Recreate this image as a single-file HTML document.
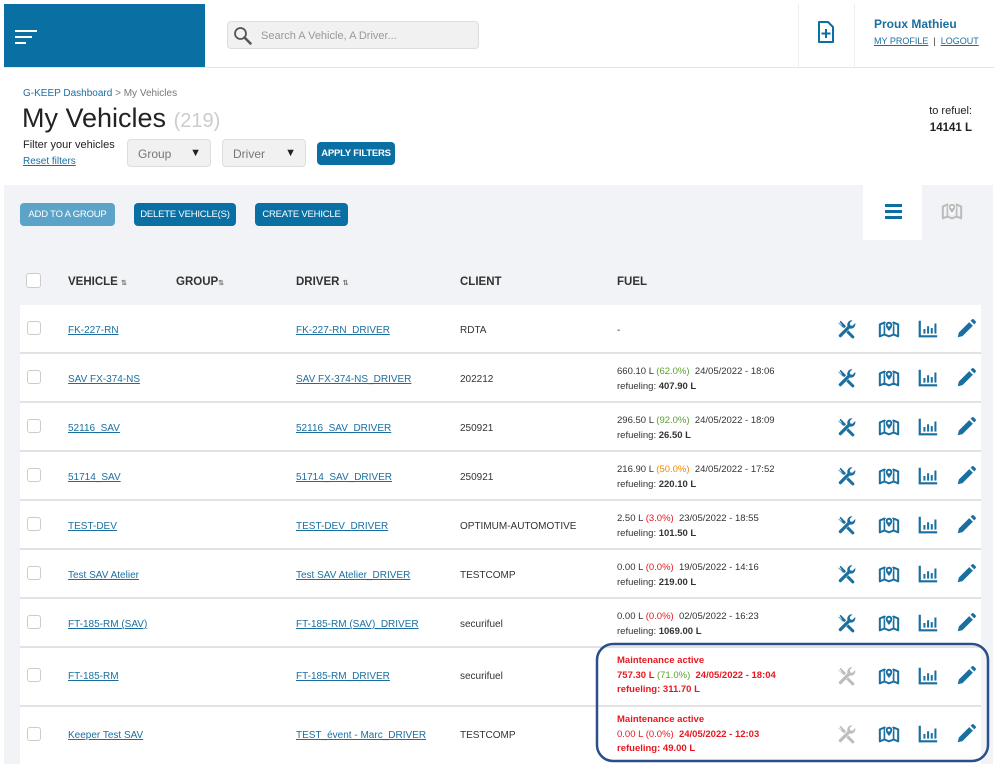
<!DOCTYPE html>
<html><head><meta charset="utf-8"><style>
*{margin:0;padding:0;box-sizing:border-box}
body{width:998px;height:764px;overflow:hidden;background:#fff;font-family:"Liberation Sans",sans-serif;color:#333;position:relative}
.a{position:absolute}
.lnk{color:#1a6fa0;text-decoration:underline;font-size:10px}
.btn{position:absolute;background:#0a6fa3;color:#fff;font-size:9.5px;border-radius:4px;text-align:center;line-height:24px;letter-spacing:-0.2px}
.row{position:absolute;left:20px;width:961px;background:#fff;border-bottom:2px solid #e2e2e4}
.cb{position:absolute;left:7px;width:14px;height:14px;border:1px solid #ccc;border-radius:3px;background:#fff}
.t{position:absolute;font-size:10px;white-space:nowrap}
.f{position:absolute;left:597px;font-size:9.5px;line-height:14.5px;white-space:nowrap}
.f b{font-weight:bold}
.hd{position:absolute;top:276px;font-size:11.5px;font-weight:bold;color:#333}
.red{color:#e8171f}.grn{color:#5aa02c}.org{color:#f08c00}
</style></head><body>
<svg width="0" height="0" style="position:absolute">
<defs>
<symbol id="tool" viewBox="0 0 24 24"><path d="M3 5l2-2 6 6-2 2z M4 4l-1.5 1.5 6 6" fill="currentColor"/><path d="M13.5 13.5l6 6a1.6 1.6 0 0 1-2.3 2.3l-6-6z" fill="currentColor"/><path d="M21 5.5l-3 3-2.5-.5-.5-2.5 3-3a5 5 0 0 0-5.5 6.5L3 18.5a2 2 0 0 0 2.5 2.5L15 11.5a5 5 0 0 0 6-6z" fill="currentColor"/></symbol>
<symbol id="map" viewBox="0 0 24 24"><path d="M2 7l5-2 5 2 5-2 5 2v13l-5-2-5 2-5-2-5 2z" fill="none" stroke="currentColor" stroke-width="2.2" stroke-linejoin="round"/><path d="M7 5v13M17 5v13" stroke="currentColor" stroke-width="1.8"/><path d="M12 15c-3-3.5-4.2-5.2-4.2-7.2a4.2 4.2 0 0 1 8.4 0c0 2-1.2 3.7-4.2 7.2z" fill="currentColor" stroke="#fff" stroke-width="1"/><circle cx="12" cy="7.8" r="1.5" fill="#fff"/></symbol>
<symbol id="chart" viewBox="0 0 24 24"><path d="M3 3v17h19" fill="none" stroke="currentColor" stroke-width="2.4"/><rect x="7" y="12" width="2.2" height="5" fill="currentColor"/><rect x="11" y="9" width="2.2" height="8" fill="currentColor"/><rect x="15" y="11" width="2.2" height="6" fill="currentColor"/><rect x="19" y="6" width="2.2" height="11" fill="currentColor"/></symbol>
<symbol id="pen" viewBox="0 0 24 24"><path d="M3 21l1.2-5.2L15.5 4.5l4 4L8.2 19.8z" fill="currentColor"/><path d="M17 3l1.5-1.5a1.5 1.5 0 0 1 2 0l2 2a1.5 1.5 0 0 1 0 2L21 7z" fill="currentColor"/></symbol>
</defs></svg>

<div class="a" style="left:4px;top:4px;width:201px;height:63px;background:#0a6fa3"></div>
<div class="a" style="left:15px;top:30px;width:22px;height:2px;background:#fff"></div>
<div class="a" style="left:15px;top:36px;width:17px;height:2px;background:#fff"></div>
<div class="a" style="left:15px;top:42px;width:11px;height:2px;background:#fff"></div>
<div class="a" style="left:227px;top:21px;width:252px;height:28px;background:#f1f1f1;border:1px solid #ddd;border-radius:4px"></div>
<svg class="a" style="left:233px;top:26px" width="20" height="20" viewBox="0 0 20 20"><circle cx="7.5" cy="7.5" r="5.5" fill="none" stroke="#555" stroke-width="1.8"/><path d="M11.5 11.5l6 6" stroke="#555" stroke-width="2.6" stroke-linecap="round"/></svg>
<div class="a" style="left:261px;top:30px;font-size:11px;color:#999">Search A Vehicle, A Driver...</div>
<div class="a" style="left:4px;top:67px;width:990px;height:1px;background:#e5e5e5"></div>
<div class="a" style="left:798px;top:4px;width:1px;height:63px;background:#eee"></div>
<div class="a" style="left:854px;top:4px;width:1px;height:63px;background:#eee"></div>
<svg class="a" style="left:817px;top:20px" width="18" height="24" viewBox="0 0 18 24"><path d="M2 2h9l5 5v15H2z" fill="none" stroke="#0a6fa3" stroke-width="2" stroke-linejoin="round"/><path d="M9 9v9M4.5 13.5h9" stroke="#0a6fa3" stroke-width="2"/></svg>
<div class="a" style="left:874px;top:17px;font-size:12px;font-weight:bold;color:#1a6fa0">Proux Mathieu</div>
<div class="a" style="left:874px;top:36px;font-size:9px;color:#1a6fa0"><u>MY PROFILE</u> &nbsp;<span style="color:#333">|</span>&nbsp; <u>LOGOUT</u></div>

<div class="a" style="left:23px;top:88px;font-size:10px;color:#1a6fa0">G-KEEP Dashboard <span style="color:#777">&gt; My Vehicles</span></div>
<div class="a" style="left:22px;top:103px;font-size:27px;color:#222">My Vehicles <span style="font-size:20px;color:#ccc">(219)</span></div>
<div class="a" style="left:23px;top:139px;font-size:11px;color:#222">Filter your vehicles</div>
<div class="a lnk" style="left:23px;top:156px;font-size:10px">Reset filters</div>
<div class="a" style="left:127px;top:139px;width:84px;height:28px;background:#f1f1f1;border:1px solid #ddd;border-radius:4px;font-size:12px;color:#777;padding:7px 0 0 10px">Group<span style="position:absolute;right:9px;top:7px;color:#222;font-size:11px">▼</span></div>
<div class="a" style="left:222px;top:139px;width:84px;height:28px;background:#f1f1f1;border:1px solid #ddd;border-radius:4px;font-size:12px;color:#777;padding:7px 0 0 10px">Driver<span style="position:absolute;right:9px;top:7px;color:#222;font-size:11px">▼</span></div>
<div class="btn" style="left:317px;top:142px;width:78px;height:23px;font-weight:bold">APPLY FILTERS</div>
<div class="a" style="left:900px;top:105px;width:72px;text-align:right;font-size:11px;color:#222">to refuel:</div>
<div class="a" style="left:900px;top:122px;width:72px;text-align:right;font-size:11.5px;font-weight:bold;color:#222">14141 L</div>

<div class="a" style="left:4px;top:185px;width:989px;height:579px;background:#f2f3f7"></div>
<div class="a" style="left:863px;top:185px;width:59px;height:55px;background:#fff"></div>
<div class="a" style="left:885px;top:204px;width:17px;height:2.5px;background:#0a6fa3;box-shadow:0 6px 0 #0a6fa3,0 12px 0 #0a6fa3"></div>
<svg class="a" style="left:940px;top:200px;color:#bbb" width="24" height="22"><use href="#map"/></svg>
<div class="btn" style="left:20px;top:203px;width:95px;height:23px;background:#5ba3c8">ADD TO A GROUP</div>
<div class="btn" style="left:134px;top:203px;width:102px;height:23px">DELETE VEHICLE(S)</div>
<div class="btn" style="left:255px;top:203px;width:93px;height:23px">CREATE VEHICLE</div>

<div class="a" style="left:26px;top:273px;width:15px;height:15px;border:1px solid #ccc;border-radius:3px;background:#fff"></div>
<div class="hd" style="left:68px">VEHICLE <span style="font-size:7px;color:#777">⇅</span></div>
<div class="hd" style="left:176px">GROUP<span style="font-size:7px;color:#777">⇅</span></div>
<div class="hd" style="left:296px">DRIVER <span style="font-size:7px;color:#777">⇅</span></div>
<div class="hd" style="left:460px">CLIENT</div>
<div class="hd" style="left:617px">FUEL</div>

<div class="row" style="top:305px;height:49px"><div class="cb" style="top:16px"></div><a class="t lnk" style="left:48px;top:20px">FK-227-RN</a><a class="t lnk" style="left:276px;top:20px">FK-227-RN_DRIVER</a><div class="t" style="left:440px;top:20px">RDTA</div><div class="t" style="left:597px;top:20px">-</div></div>
<div class="row" style="top:354px;height:49px"><div class="cb" style="top:16px"></div><a class="t lnk" style="left:48px;top:20px">SAV FX-374-NS</a><a class="t lnk" style="left:276px;top:20px">SAV FX-374-NS_DRIVER</a><div class="t" style="left:440px;top:20px">202212</div><div class="f" style="top:11px">660.10 L <span class="grn">(62.0%)</span>&nbsp; 24/05/2022 - 18:06<br>refueling: <b>407.90 L</b></div></div>
<div class="row" style="top:403px;height:49px"><div class="cb" style="top:16px"></div><a class="t lnk" style="left:48px;top:20px">52116_SAV</a><a class="t lnk" style="left:276px;top:20px">52116_SAV_DRIVER</a><div class="t" style="left:440px;top:20px">250921</div><div class="f" style="top:11px">296.50 L <span class="grn">(92.0%)</span>&nbsp; 24/05/2022 - 18:09<br>refueling: <b>26.50 L</b></div></div>
<div class="row" style="top:452px;height:49px"><div class="cb" style="top:16px"></div><a class="t lnk" style="left:48px;top:20px">51714_SAV</a><a class="t lnk" style="left:276px;top:20px">51714_SAV_DRIVER</a><div class="t" style="left:440px;top:20px">250921</div><div class="f" style="top:11px">216.90 L <span class="org">(50.0%)</span>&nbsp; 24/05/2022 - 17:52<br>refueling: <b>220.10 L</b></div></div>
<div class="row" style="top:501px;height:49px"><div class="cb" style="top:16px"></div><a class="t lnk" style="left:48px;top:20px">TEST-DEV</a><a class="t lnk" style="left:276px;top:20px">TEST-DEV_DRIVER</a><div class="t" style="left:440px;top:20px">OPTIMUM-AUTOMOTIVE</div><div class="f" style="top:11px">2.50 L <span class="red">(3.0%)</span>&nbsp; 23/05/2022 - 18:55<br>refueling: <b>101.50 L</b></div></div>
<div class="row" style="top:550px;height:49px"><div class="cb" style="top:16px"></div><a class="t lnk" style="left:48px;top:20px">Test SAV Atelier</a><a class="t lnk" style="left:276px;top:20px">Test SAV Atelier_DRIVER</a><div class="t" style="left:440px;top:20px">TESTCOMP</div><div class="f" style="top:11px">0.00 L <span class="red">(0.0%)</span>&nbsp; 19/05/2022 - 14:16<br>refueling: <b>219.00 L</b></div></div>
<div class="row" style="top:599px;height:49px"><div class="cb" style="top:16px"></div><a class="t lnk" style="left:48px;top:20px">FT-185-RM (SAV)</a><a class="t lnk" style="left:276px;top:20px">FT-185-RM (SAV)_DRIVER</a><div class="t" style="left:440px;top:20px">securifuel</div><div class="f" style="top:11px">0.00 L <span class="red">(0.0%)</span>&nbsp; 02/05/2022 - 16:23<br>refueling: <b>1069.00 L</b></div></div>
<div class="row" style="top:648px;height:59px"><div class="cb" style="top:20px"></div><a class="t lnk" style="left:48px;top:23px">FT-185-RM</a><a class="t lnk" style="left:276px;top:23px">FT-185-RM_DRIVER</a><div class="t" style="left:440px;top:23px">securifuel</div><div class="f red" style="top:6px;font-weight:bold">Maintenance active<br>757.30 L <span class="grn" style="font-weight:normal">(71.0%)</span>&nbsp; 24/05/2022 - 18:04<br>refueling: 311.70 L</div></div>
<div class="row" style="top:707px;height:59px;border:0"><div class="cb" style="top:20px"></div><a class="t lnk" style="left:48px;top:23px">Keeper Test SAV</a><a class="t lnk" style="left:276px;top:23px">TEST_évent - Marc_DRIVER</a><div class="t" style="left:440px;top:23px">TESTCOMP</div><div class="f red" style="top:6px;font-weight:bold">Maintenance active<br><span style="font-weight:normal">0.00 L (0.0%)</span>&nbsp; 24/05/2022 - 12:03<br>refueling: 49.00 L</div></div>

<svg class="a" style="left:0;top:0;color:#0a6fa3" width="998" height="764">
<g style="color:#1a6fa0">
<use href="#tool" x="836" y="318" width="22" height="22"/><use href="#map" x="878" y="318" width="22" height="22"/><use href="#chart" x="917" y="318" width="22" height="22"/><use href="#pen" x="955" y="318" width="22" height="22"/>
<use href="#tool" x="836" y="367" width="22" height="22"/><use href="#map" x="878" y="367" width="22" height="22"/><use href="#chart" x="917" y="367" width="22" height="22"/><use href="#pen" x="955" y="367" width="22" height="22"/>
<use href="#tool" x="836" y="416" width="22" height="22"/><use href="#map" x="878" y="416" width="22" height="22"/><use href="#chart" x="917" y="416" width="22" height="22"/><use href="#pen" x="955" y="416" width="22" height="22"/>
<use href="#tool" x="836" y="465" width="22" height="22"/><use href="#map" x="878" y="465" width="22" height="22"/><use href="#chart" x="917" y="465" width="22" height="22"/><use href="#pen" x="955" y="465" width="22" height="22"/>
<use href="#tool" x="836" y="514" width="22" height="22"/><use href="#map" x="878" y="514" width="22" height="22"/><use href="#chart" x="917" y="514" width="22" height="22"/><use href="#pen" x="955" y="514" width="22" height="22"/>
<use href="#tool" x="836" y="563" width="22" height="22"/><use href="#map" x="878" y="563" width="22" height="22"/><use href="#chart" x="917" y="563" width="22" height="22"/><use href="#pen" x="955" y="563" width="22" height="22"/>
<use href="#tool" x="836" y="612" width="22" height="22"/><use href="#map" x="878" y="612" width="22" height="22"/><use href="#chart" x="917" y="612" width="22" height="22"/><use href="#pen" x="955" y="612" width="22" height="22"/>
<use href="#map" x="878" y="665" width="22" height="22"/><use href="#chart" x="917" y="665" width="22" height="22"/><use href="#pen" x="955" y="665" width="22" height="22"/>
<use href="#map" x="878" y="723" width="22" height="22"/><use href="#chart" x="917" y="723" width="22" height="22"/><use href="#pen" x="955" y="723" width="22" height="22"/>
</g>
<g style="color:#bdbdbd"><use href="#tool" x="836" y="665" width="22" height="22"/><use href="#tool" x="836" y="723" width="22" height="22"/></g>
<rect x="597" y="644" width="391" height="117" rx="16" fill="none" stroke="#2a4f8c" stroke-width="2.5"/>
</svg>
</body></html>
